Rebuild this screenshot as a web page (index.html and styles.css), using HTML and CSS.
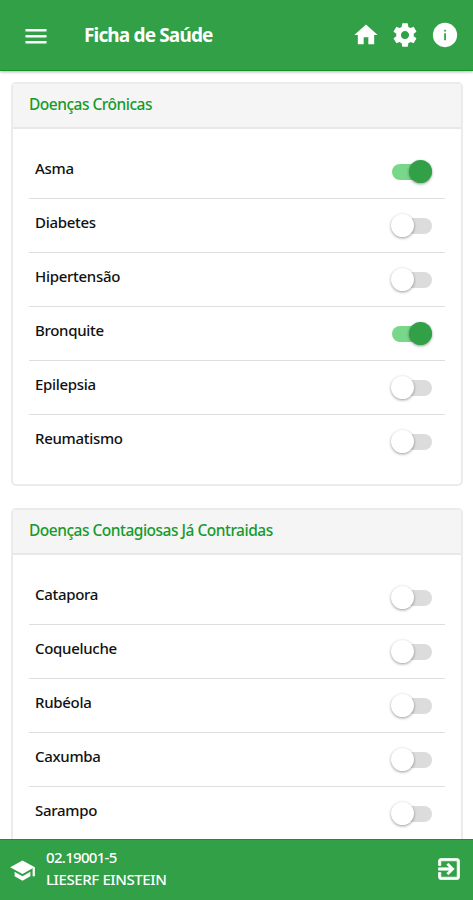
FILE: index.html
```html
<!DOCTYPE html>
<html lang="pt-BR">
<head>
    <meta charset="UTF-8">
    <title>Ficha de Saúde</title>
    <link rel="stylesheet" href="styles.css">
</head>
<body>
    <header class="topbar">
        <svg class="menu-icon" viewBox="0 0 21 15"><path d="M0 0h21v2.6H0zM0 6h21v2.6H0zM0 12h21v2.6H0z"/></svg>
        <h1 class="title">Ficha de Saúde</h1>
        <div class="actions">
            <svg class="icon" viewBox="0 0 24 24"><path d="M10 20v-6h4v6h5v-8h3L12 3 2 12h3v8z"/></svg>
            <svg class="icon" viewBox="0 0 24 24"><path d="M19.43 12.98c.04-.32.07-.64.07-.98s-.03-.66-.07-.98l2.11-1.65c.19-.15.24-.42.12-.64l-2-3.46c-.12-.22-.39-.3-.61-.22l-2.49 1c-.52-.4-1.08-.73-1.69-.98l-.38-2.65C14.46 2.18 14.25 2 14 2h-4c-.25 0-.46.18-.49.42l-.38 2.65c-.61.25-1.17.59-1.69.98l-2.49-1c-.23-.09-.49 0-.61.22l-2 3.46c-.13.22-.07.49.12.64l2.11 1.65c-.04.32-.07.65-.07.98s.03.66.07.98l-2.11 1.65c-.19.15-.24.42-.12.64l2 3.46c.12.22.39.3.61.22l2.49-1c.52.4 1.08.73 1.69.98l.38 2.65c.03.24.24.42.49.42h4c.25 0 .46-.18.49-.42l.38-2.65c.61-.25 1.17-.59 1.69-.98l2.49 1c.23.09.49 0 .61-.22l2-3.46c.12-.22.07-.49-.12-.64l-2.11-1.65zM12 15.5c-1.93 0-3.5-1.57-3.5-3.5s1.57-3.5 3.5-3.5 3.5 1.57 3.5 3.5-1.57 3.5-3.5 3.5z"/></svg>
            <svg class="icon" viewBox="0 0 24 24"><circle cx="12" cy="12" r="10.4"/><path class="cut" d="M11.3 7.5h1.5v1.6h-1.5zM11.3 10.6h1.5v6h-1.5z"/></svg>
        </div>
    </header>

    <main class="content">
        <section class="card">
            <h2 class="card-header">Doenças Crônicas</h2>
            <ul class="list">
                <li class="item"><span class="label">Asma</span><span class="toggle on"></span></li>
                <li class="item"><span class="label">Diabetes</span><span class="toggle"></span></li>
                <li class="item"><span class="label">Hipertensão</span><span class="toggle"></span></li>
                <li class="item"><span class="label">Bronquite</span><span class="toggle on"></span></li>
                <li class="item"><span class="label">Epilepsia</span><span class="toggle"></span></li>
                <li class="item"><span class="label">Reumatismo</span><span class="toggle"></span></li>
            </ul>
        </section>

        <section class="card">
            <h2 class="card-header">Doenças Contagiosas Já Contraidas</h2>
            <ul class="list">
                <li class="item"><span class="label">Catapora</span><span class="toggle"></span></li>
                <li class="item"><span class="label">Coqueluche</span><span class="toggle"></span></li>
                <li class="item"><span class="label">Rubéola</span><span class="toggle"></span></li>
                <li class="item"><span class="label">Caxumba</span><span class="toggle"></span></li>
                <li class="item"><span class="label">Sarampo</span><span class="toggle"></span></li>
            </ul>
        </section>
    </main>

    <footer class="bottombar">
        <svg class="school-icon" viewBox="0 0 24 24"><path d="M5 13.18v4L12 21l7-3.82v-4L12 17l-7-3.82zM12 3L1 9l11 6 9-4.91V17h2V9L12 3z"/></svg>
        <div class="student">
            <div class="code">02.19001-5</div>
            <div class="name">LIESERF EINSTEIN</div>
        </div>
        <svg class="exit-icon" viewBox="0 0 24 24"><path d="M10.09 15.59L11.5 17l5-5-5-5-1.41 1.41L12.67 11H3v2h9.67l-2.58 2.59zM19 3H5c-1.11 0-2 .9-2 2v4h2V5h14v14H5v-4H3v4c0 1.1.89 2 2 2h14c1.1 0 2-.9 2-2V5c0-1.1-.9-2-2-2z"/></svg>
    </footer>
</body>
</html>
```
FILE: styles.css
```css
* {
    box-sizing: border-box;
}

body {
    display: flex;
    flex-direction: column;
    height: 900px;
    margin: 0;
    overflow: hidden;
    background: #fff;
    color: #111;
    font-family: "Noto Sans", "Open Sans", sans-serif;
}

svg {
    display: block;
    flex: none;
    fill: #fff;
}

.topbar {
    display: flex;
    align-items: center;
    flex: none;
    height: 71px;
    padding: 0 14.5px 0 25px;
    background: #31a047;
    border-bottom: 1px solid #159229;
    box-shadow: 0 1px 3px rgba(0, 0, 0, 0.3);
}

.menu-icon {
    width: 22px;
    height: 15px;
    margin-top: 2px;
}

.title {
    flex: 1;
    margin: 0 0 0 37px;
    color: #fff;
    font-size: 19px;
    font-weight: 700;
    line-height: 26px;
    letter-spacing: -0.85px;
}

.actions {
    display: flex;
    gap: 11.5px;
}

.icon {
    width: 28px;
    height: 28px;
}

.icon .cut {
    fill: #31a047;
}

.content {
    flex: 1;
    min-height: 0;
    padding: 11px 10px 0 11px;
    overflow: hidden;
}

.card {
    margin-bottom: 22px;
    border: 2px solid #ebebeb;
    border-radius: 5px;
}

.card-header {
    height: 45px;
    margin: 0;
    padding: 0 16px;
    border-bottom: 2px solid #e8e8e8;
    background: #f5f5f5;
    color: #159a2c;
    font-size: 15.5px;
    font-weight: 500;
    line-height: 41px;
    letter-spacing: -0.5px;
    white-space: nowrap;
}

.list {
    margin: 0;
    padding: 16px 16px 15px;
    list-style: none;
}

.item {
    display: flex;
    align-items: center;
    justify-content: space-between;
    height: 54px;
    padding: 0 13px 0 6px;
    border-bottom: 1px solid #dedede;
}

.item:last-child {
    border-bottom-color: transparent;
}

.label {
    margin-top: -7px;
    font-size: 15px;
    font-weight: 500;
    line-height: 20px;
    letter-spacing: -0.3px;
}

.toggle {
    position: relative;
    width: 40px;
    height: 16px;
    border-radius: 8px;
    background: #dcdcdc;
}

.toggle::after {
    content: "";
    position: absolute;
    top: -4px;
    left: -1px;
    width: 23px;
    height: 23px;
    border-radius: 50%;
    background: #fff;
    box-shadow: 0 1px 3px rgba(0, 0, 0, 0.4);
}

.toggle.on {
    background: #78d788;
}

.toggle.on::after {
    left: 17px;
    background: #31a047;
}

.bottombar {
    display: flex;
    align-items: center;
    flex: none;
    height: 61px;
    padding: 0 10px 0 9px;
    border-top: 1px solid #159229;
    background: #31a047;
    color: #fff;
}

.school-icon {
    width: 27px;
    height: 27px;
}

.student {
    flex: 1;
    margin: -4px 0 0 10px;
    font-size: 15px;
    font-weight: 500;
    line-height: 22px;
}

.code {
    letter-spacing: -0.7px;
}

.name {
    letter-spacing: -0.4px;
}

.exit-icon {
    width: 28px;
    height: 28px;
    margin-top: -3px;
    stroke: #fff;
    stroke-width: 0.6;
}
```
